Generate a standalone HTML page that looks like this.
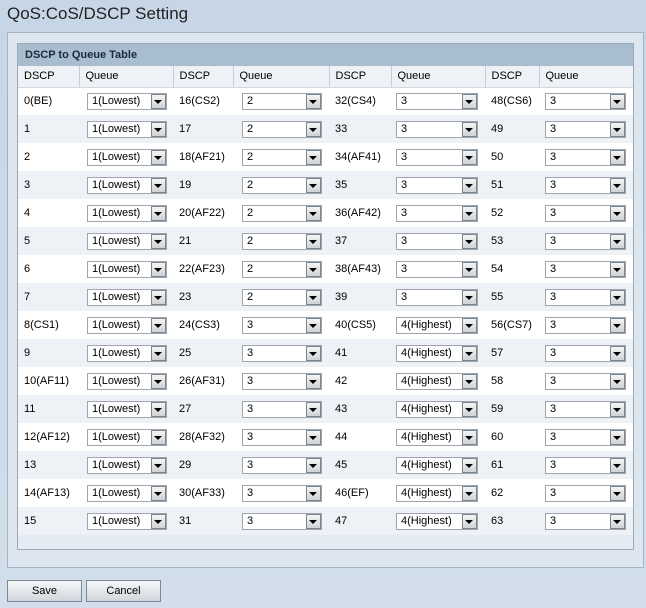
<!DOCTYPE html>
<html><head><style>
body{margin:0;width:646px;height:608px;background:linear-gradient(#c6d6e6,#d2dfeb);font-family:"Liberation Sans",Arial,sans-serif;font-size:11px;color:#000;position:relative;overflow:hidden}
h1{position:absolute;left:7px;top:4px;margin:0;font-weight:normal;font-size:17px;color:#222}
.outer{position:absolute;left:7px;top:32px;width:637px;height:536px;background:#dde6ef;border:1px solid #a5b4c2;box-sizing:border-box}
.inner{position:absolute;left:17px;top:43px;width:617px;height:507px;background:#e4ebf2;border:1px solid #9aaabb;box-sizing:border-box}
.th{position:absolute;left:0;top:0;width:615px;height:22px;background:#a8bdce;font-weight:bold;line-height:22px;padding-left:7px;box-sizing:border-box;color:#1a2a3a}
table{position:absolute;left:0;top:22px;border-collapse:collapse;width:615px;table-layout:fixed}
td{height:28px;padding:0 0 0 6px;box-sizing:border-box;overflow:visible;white-space:nowrap}
tr.h td{height:21px;background:#eef1f5;border-left:1px solid #c5ced8;border-bottom:1px solid #d0d8e0}
tr.h td:first-child{border-left:none}
tr:nth-child(even) td{background:#eef1f5}
tr:nth-child(odd):not(.h) td{background:#fff}
.s{position:relative;height:17px;border:1px solid #9da6ae;background:#fff;box-sizing:border-box;padding-left:4px;line-height:15px}
.s:after{content:"";position:absolute;right:0;top:0;width:15px;height:15px;background:linear-gradient(#f4f4f4,#cfd2d5);border-left:1px solid #7d858c;box-sizing:border-box;border:1px solid #7d858c}
.s:before{content:"";position:absolute;right:4px;top:6px;border:4px solid transparent;border-top:4px solid #000;border-bottom:0;z-index:1}
.btn{position:absolute;top:580px;height:22px;border:1px solid #7c8894;background:linear-gradient(#f6f7f8,#d0d6dc);box-sizing:border-box;text-align:center;line-height:20px;font-size:11px}
</style></head><body>
<h1>QoS:CoS/DSCP Setting</h1>
<div class="outer"></div>
<div class="inner"><div class="th">DSCP to Queue Table</div>
<table>
<colgroup><col style="width:61px"><col style="width:94px"><col style="width:60px"><col style="width:96px"><col style="width:62px"><col style="width:94px"><col style="width:54px"><col style="width:94px"></colgroup>
<tr class="h"><td>DSCP</td><td>Queue</td><td>DSCP</td><td>Queue</td><td>DSCP</td><td>Queue</td><td>DSCP</td><td>Queue</td></tr>
<tbody id="b"></tbody>
</table></div>
<div class="btn" style="left:7px;width:75px">Save</div>
<div class="btn" style="left:86px;width:75px">Cancel</div>
<script>
var n={0:"BE",8:"CS1",10:"AF11",12:"AF12",14:"AF13",16:"CS2",18:"AF21",20:"AF22",22:"AF23",24:"CS3",26:"AF31",28:"AF32",30:"AF33",32:"CS4",34:"AF41",36:"AF42",38:"AF43",40:"CS5",46:"EF",48:"CS6",56:"CS7"};
function q(d){if(d<16)return"1(Lowest)";if(d<24)return"2";if(d<40)return"3";if(d<48)return"4(Highest)";return"3";}
var w=[80,80,82,81],p=[8,9,5,6],h="";
for(var r=0;r<16;r++){h+="<tr>";for(var c=0;c<4;c++){var d=r+16*c;h+="<td>"+d+(n[d]?"("+n[d]+")":"")+"</td><td style='padding-left:"+p[c]+"px'><div class='s' style='width:"+w[c]+"px'>"+q(d)+"</div></td>";}h+="</tr>";}
document.getElementById("b").innerHTML=h;
</script>
</body></html>
